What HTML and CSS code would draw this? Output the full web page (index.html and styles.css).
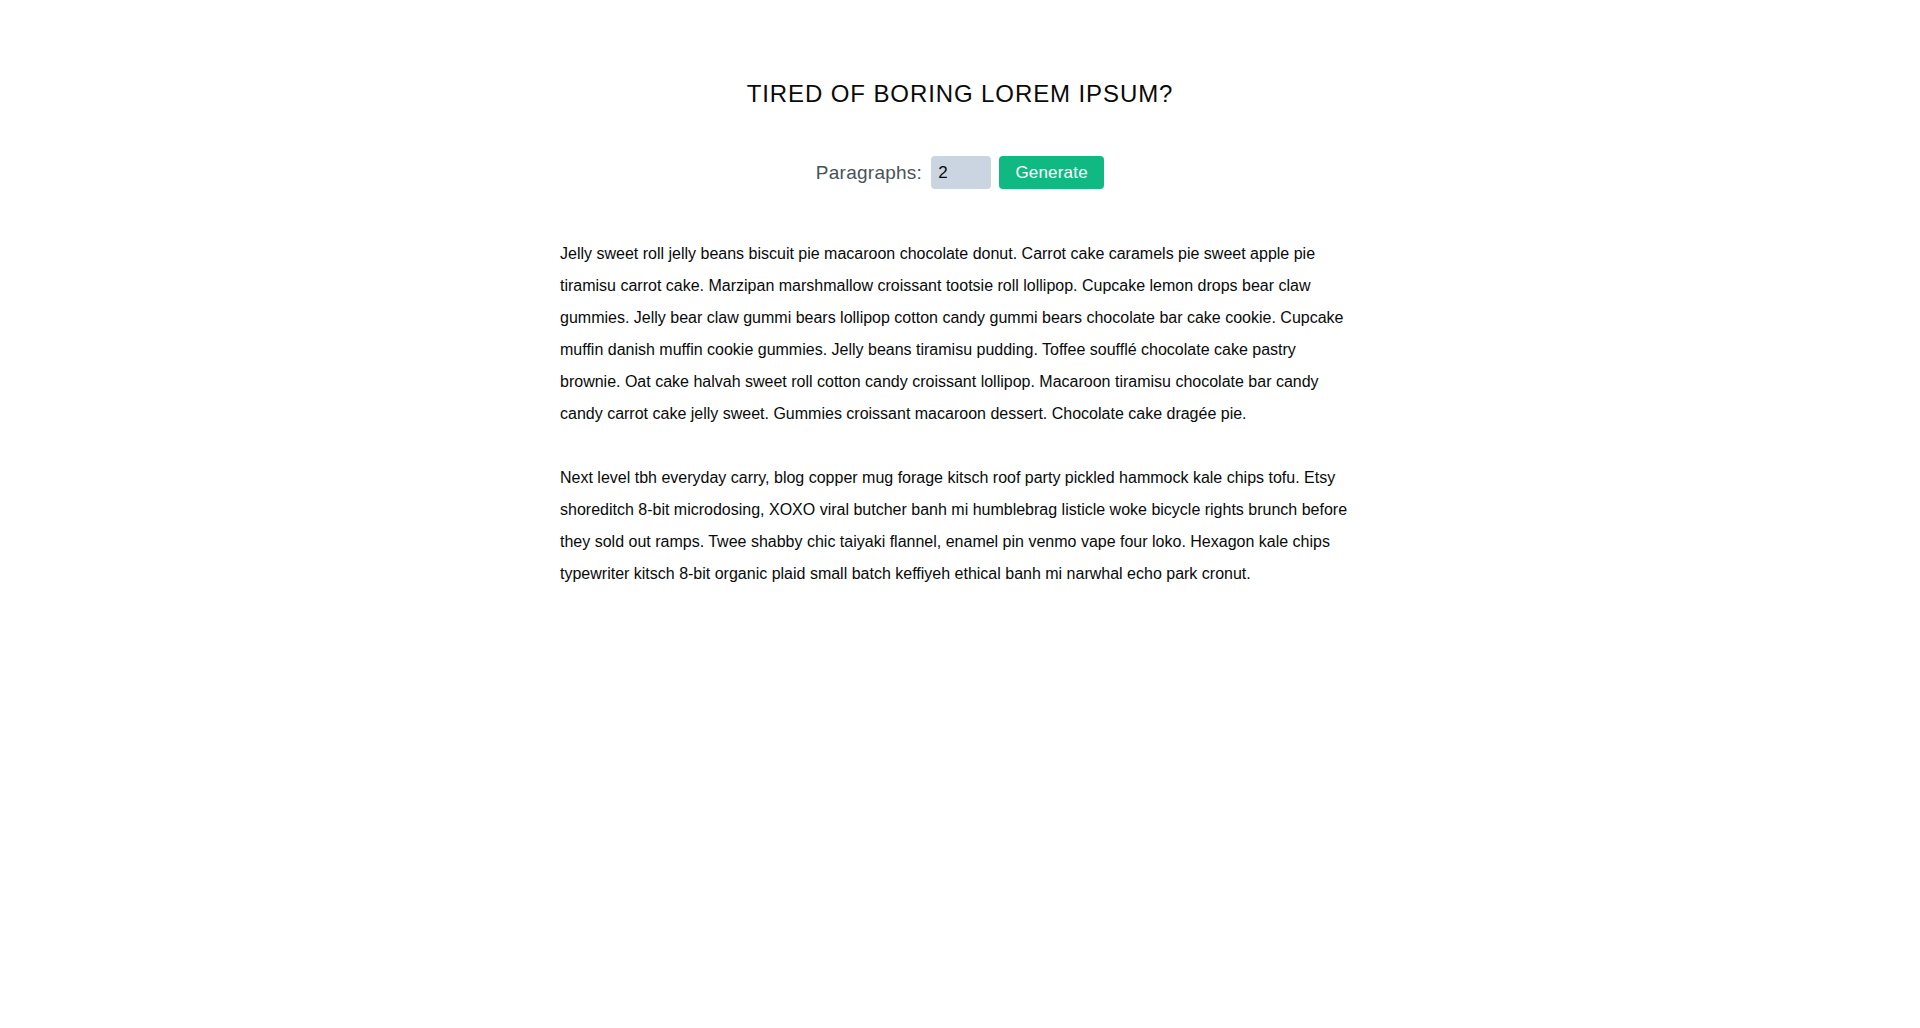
FILE: index.html
```html
<!DOCTYPE html>
<html lang="en">
<head>
<meta charset="utf-8">
<title>Lorem Ipsum Generator</title>
<link rel="stylesheet" href="styles.css">
</head>
<body>
<section class="section-center">
  <h3 class="title">Tired of boring lorem ipsum?</h3>
  <form class="lorem-form">
    <label class="lorem-label" for="amount">Paragraphs:</label>
    <input class="lorem-input" type="number" id="amount" name="amount" value="2">
    <button class="btn" type="button">Generate</button>
  </form>
  <article class="lorem-text">
    <p>Jelly sweet roll jelly beans biscuit pie macaroon chocolate donut. Carrot cake caramels pie sweet apple pie tiramisu carrot cake. Marzipan marshmallow croissant tootsie roll lollipop. Cupcake lemon drops bear claw gummies. Jelly bear claw gummi bears lollipop cotton candy gummi bears chocolate bar cake cookie. Cupcake muffin danish muffin cookie gummies. Jelly beans tiramisu pudding. Toffee soufflé chocolate cake pastry brownie. Oat cake halvah sweet roll cotton candy croissant lollipop. Macaroon tiramisu chocolate bar candy candy carrot cake jelly sweet. Gummies croissant macaroon dessert. Chocolate cake dragée pie.</p>
    <p>Next level tbh everyday carry, blog copper mug forage kitsch roof party pickled hammock kale chips tofu. Etsy shoreditch 8-bit microdosing, XOXO viral butcher banh mi humblebrag listicle woke bicycle rights brunch before they sold out ramps. Twee shabby chic taiyaki flannel, enamel pin venmo vape four loko. Hexagon kale chips typewriter kitsch 8-bit organic plaid small batch keffiyeh ethical banh mi narwhal echo park cronut.</p>
  </article>
</section>
</body>
</html>
```
FILE: styles.css
```css
* { box-sizing: border-box; }
html, body { margin: 0; padding: 0; }
body {
  background: #ffffff;
  color: #0a0a0a;
  font-family: "Liberation Sans", Arial, sans-serif;
}
.section-center {
  width: 800px;
  margin: 0 auto;
  padding-top: 80px;
  text-align: center;
}
.title {
  margin: 0;
  font-size: 24px;
  font-weight: 400;
  line-height: normal;
  letter-spacing: 0.9px;
  text-transform: uppercase;
  color: #0a0a0a;
}
.lorem-form {
  display: flex;
  justify-content: center;
  align-items: center;
  margin: 48px 0 49px;
}
.lorem-label {
  font-size: 19px;
  letter-spacing: 0.25px;
  color: #4b525c;
  margin-right: 9px;
}
.lorem-input {
  width: 60px;
  height: 33px;
  border: none;
  border-radius: 4px;
  background: #cbd5e1;
  padding: 0 7px;
  font-family: "Liberation Sans", Arial, sans-serif;
  font-size: 17px;
  color: #0a0a0a;
  margin-right: 8px;
  -moz-appearance: textfield;
}
.lorem-input::-webkit-outer-spin-button,
.lorem-input::-webkit-inner-spin-button { -webkit-appearance: none; margin: 0; }
.btn {
  width: 105px;
  height: 33px;
  border: none;
  border-radius: 4px;
  background: #10b981;
  color: #ffffff;
  font-family: "Liberation Sans", Arial, sans-serif;
  font-size: 17px;
  letter-spacing: 0.2px;
  padding: 0;
  cursor: pointer;
}
.lorem-text {
  text-align: left;
}
.lorem-text p {
  margin: 0 0 32px;
  font-size: 16px;
  line-height: 32px;
  color: #0a0a0a;
}
```
